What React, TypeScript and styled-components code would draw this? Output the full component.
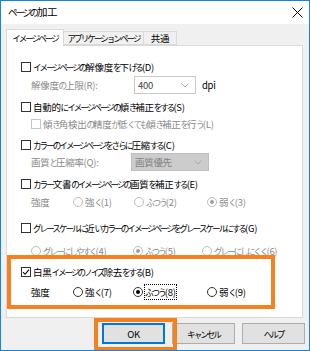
import React from 'react'
import styled, { createGlobalStyle } from 'styled-components'

const GlobalStyle = createGlobalStyle`
  html, body {
    margin: 0;
    padding: 0;
    background: #ffffff;
  }
  body {
    font-family: "Noto Sans CJK JP", "Noto Sans", sans-serif;
    font-size: 9.5px;
    letter-spacing: -0.3px;
    color: #000;
  }
`

// Kana runs are set a touch smaller and tighter so they read like the UI font's proportional kana
const Kana = styled.span`
  font-size: 0.9em;
  letter-spacing: -0.23em;
`

const KANA_RUN = /([\u3041-\u30ff]+)/

function Jp({ children }: { children: string }) {
  const parts = children.split(KANA_RUN)
  return (
    <>
      {parts.map((p, i) => (KANA_RUN.test(p) && /^[\u3041-\u30ff]+$/.test(p) ? <Kana key={i}>{p}</Kana> : p))}
    </>
  )
}

const Window = styled.div`
  width: 310px;
  height: 351px;
  box-sizing: border-box;
  border: 1px solid #1883d7;
  background: #f0f0f0;
  display: flex;
  flex-direction: column;
  overflow: hidden;
`

const TitleBar = styled.div`
  height: 23px;
  flex-shrink: 0;
  background: #ffffff;
  display: flex;
  align-items: center;
  justify-content: space-between;
  padding: 0 6px 0 7px;
`

const Title = styled.span`
  font-size: 10.5px;
  line-height: 1;
`

const CloseIcon = styled.svg`
  width: 11px;
  height: 11px;
`

const TabBar = styled.div`
  display: flex;
  align-items: flex-end;
  margin-top: 5px;
  padding-left: 5px;
  position: relative;
  z-index: 1;
`

const Tab = styled.div<{ $active?: boolean; $first?: boolean; $w: number }>`
  box-sizing: border-box;
  width: ${({ $w }) => $w}px;
  height: ${({ $active }) => ($active ? '17px' : '14px')};
  margin-bottom: ${({ $active }) => ($active ? '-1px' : '0')};
  display: flex;
  align-items: center;
  justify-content: center;
  background: ${({ $active }) => ($active ? '#ffffff' : '#f0f0f0')};
  border-top: 1px solid #d9d9d9;
  border-right: 1px solid #d9d9d9;
  border-left: ${({ $first }) => ($first ? '1px solid #d9d9d9' : 'none')};
  border-bottom: ${({ $active }) => ($active ? 'none' : '1px solid #d9d9d9')};
  white-space: nowrap;
`

const Panel = styled.div`
  box-sizing: border-box;
  margin: 0 6px 0 5px;
  height: 273px;
  background: #ffffff;
  border: 1px solid #d9d9d9;
  padding: 0 0 0 14px;
  display: flex;
  flex-direction: column;
`

const Row = styled.div<{ $mt: number; $h?: number; $indent?: number }>`
  display: flex;
  align-items: center;
  height: ${({ $h }) => $h ?? 14}px;
  margin-top: ${({ $mt }) => $mt}px;
  margin-left: ${({ $indent }) => $indent ?? 0}px;
  white-space: nowrap;
`

const Box = styled.span<{ $disabled?: boolean }>`
  box-sizing: border-box;
  width: 10px;
  height: 10px;
  flex-shrink: 0;
  border: 1px solid ${({ $disabled }) => ($disabled ? '#c6c6c6' : '#333333')};
  background: #ffffff;
  display: flex;
  align-items: center;
  justify-content: center;
  margin-right: 2px;
`

const Label = styled.span<{ $disabled?: boolean }>`
  color: ${({ $disabled }) => ($disabled ? '#8a8a8a' : '#000000')};
  line-height: 14px;
`

const FieldLabel = styled(Label)<{ $w: number }>`
  margin-left: 10px;
  width: ${({ $w }) => $w}px;
`

const Select = styled.div<{ $w: number; $disabled?: boolean }>`
  box-sizing: border-box;
  width: ${({ $w }) => $w}px;
  height: 100%;
  border: 1px solid ${({ $disabled }) => ($disabled ? '#bfbfbf' : '#c8c8c8')};
  background: ${({ $disabled }) => ($disabled ? '#cccccc' : '#ffffff')};
  color: ${({ $disabled }) => ($disabled ? '#838383' : '#444444')};
  display: flex;
  align-items: center;
  justify-content: space-between;
  padding: 0 6px 0 3px;
`

const Unit = styled.span`
  margin-left: 6px;
  color: #000;
`

const RadioGrid = styled.div<{ $mt: number; $cols: string }>`
  display: grid;
  grid-template-columns: ${({ $cols }) => $cols};
  align-items: center;
  height: 14px;
  margin-top: ${({ $mt }) => $mt}px;
  margin-left: 10px;
  white-space: nowrap;
`

const RadioItem = styled.span`
  display: flex;
  align-items: center;
`

const Circle = styled.span<{ $disabled?: boolean }>`
  box-sizing: border-box;
  width: 10px;
  height: 10px;
  border-radius: 50%;
  border: 1px solid ${({ $disabled }) => ($disabled ? '#bcbcbc' : '#333333')};
  background: #ffffff;
  display: flex;
  align-items: center;
  justify-content: center;
  margin-right: 2px;
  flex-shrink: 0;
`

const Dot = styled.span<{ $disabled?: boolean }>`
  width: 4px;
  height: 4px;
  border-radius: 50%;
  background: ${({ $disabled }) => ($disabled ? '#a0a0a0' : '#000000')};
`

const Focus = styled.span`
  outline: 1px dotted #000;
  outline-offset: 0;
  line-height: 11px;
`

const Group = styled.div`
  position: relative;
  display: flex;
  flex-direction: column;
`

const Ring = styled.div<{ $t: number; $l: number; $w: number; $h: number }>`
  position: absolute;
  top: ${({ $t }) => $t}px;
  left: ${({ $l }) => $l}px;
  width: ${({ $w }) => $w}px;
  height: ${({ $h }) => $h}px;
  box-sizing: border-box;
  border: 4px solid #f5821f;
  pointer-events: none;
`

const ButtonBar = styled.div`
  display: flex;
  justify-content: flex-end;
  gap: 7px;
  margin-top: 5px;
  padding-right: 4px;
`

const ButtonSlot = styled.div`
  position: relative;
`

const Button = styled.button<{ $default?: boolean }>`
  box-sizing: border-box;
  width: 63px;
  height: 21px;
  margin: 0;
  padding: 0;
  background: #e1e1e1;
  border: ${({ $default }) => ($default ? '2px solid #0078d7' : '1px solid #adadad')};
  font-family: inherit;
  font-size: 9.5px;
  letter-spacing: -0.3px;
  color: #000;
`

function CheckMark() {
  return (
    <svg width="8" height="8" viewBox="0 0 8 8">
      <path d="M1 4.2 L3.1 6.3 L7 1.6" fill="none" stroke="#000" strokeWidth="1.1" />
    </svg>
  )
}

function Check({ label, checked, disabled }: { label: string; checked?: boolean; disabled?: boolean }) {
  return (
    <>
      <Box $disabled={disabled}>{checked && <CheckMark />}</Box>
      <Label $disabled={disabled}>
        <Jp>{label}</Jp>
      </Label>
    </>
  )
}

function Radio({ label, checked, disabled, focused }: { label: string; checked?: boolean; disabled?: boolean; focused?: boolean }) {
  return (
    <RadioItem>
      <Circle $disabled={disabled}>{checked && <Dot $disabled={disabled} />}</Circle>
      <Label $disabled={disabled}>
        {focused ? (
          <Focus>
            <Jp>{label}</Jp>
          </Focus>
        ) : (
          <Jp>{label}</Jp>
        )}
      </Label>
    </RadioItem>
  )
}

function Chevron({ color }: { color: string }) {
  return (
    <svg width="8" height="5" viewBox="0 0 8 5">
      <path d="M0.5 0.5 L4 4 L7.5 0.5" fill="none" stroke={color} strokeWidth="1" />
    </svg>
  )
}

export default function App() {
  return (
    <>
      <GlobalStyle />
      <Window>
        <TitleBar>
          <Title>
            <Jp>ページの加工</Jp>
          </Title>
          <CloseIcon viewBox="0 0 11 11">
            <path d="M0.5 0.5 L10.5 10.5 M10.5 0.5 L0.5 10.5" stroke="#000" strokeWidth="1" />
          </CloseIcon>
        </TitleBar>

        <TabBar>
          <Tab $active $first $w={58}>
            <Jp>イメージページ</Jp>
          </Tab>
          <Tab $w={80}>
            <Jp>アプリケーションページ</Jp>
          </Tab>
          <Tab $w={33}>共通</Tab>
        </TabBar>

        <Panel>
          <Row $mt={14}>
            <Check label="イメージページの解像度を下げる(D)" />
          </Row>
          <Row $mt={2} $h={18}>
            <FieldLabel $disabled $w={103}>
              <Jp>解像度の上限(R):</Jp>
            </FieldLabel>
            <Select $w={62}>
              <span>400</span>
              <Chevron color="#a8a8a8" />
            </Select>
            <Unit>dpi</Unit>
          </Row>
          <Row $mt={6}>
            <Check label="自動的にイメージページの傾き補正をする(S)" />
          </Row>
          <Row $mt={3} $indent={10}>
            <Check disabled label="傾き角検出の精度が低くても傾き補正を行う(L)" />
          </Row>
          <Row $mt={7}>
            <Check label="カラーのイメージページをさらに圧縮する(C)" />
          </Row>
          <Row $mt={1} $h={18}>
            <FieldLabel $disabled $w={100}>
              <Jp>画質と圧縮率(Q):</Jp>
            </FieldLabel>
            <Select $w={78} $disabled>
              <span>画質優先</span>
              <Chevron color="#a8a8a8" />
            </Select>
          </Row>
          <Row $mt={6}>
            <Check label="カラー文書のイメージページの画質を補正する(E)" />
          </Row>
          <RadioGrid $mt={4} $cols="42px 61px 73px auto">
            <Label $disabled>強度</Label>
            <Radio disabled label="強く(1)" />
            <Radio disabled label="ふつう(2)" />
            <Radio disabled checked label="弱く(3)" />
          </RadioGrid>
          <Row $mt={12}>
            <Check label="グレースケールに近いカラーのイメージページをグレースケールにする(G)" />
          </Row>
          <RadioGrid $mt={9} $cols="102px 69px auto">
            <Radio disabled label="グレーにしやすく(4)" />
            <Radio disabled checked label="ふつう(5)" />
            <Radio disabled label="グレーにしにくく(6)" />
          </RadioGrid>

          <Group>
            <Row $mt={7}>
              <Check checked label="白黒イメージのノイズ除去をする(B)" />
            </Row>
            <RadioGrid $mt={6} $cols="42px 60px 74px auto">
              <Label>強度</Label>
              <Radio label="強く(7)" />
              <Radio checked focused label="ふつう(8)" />
              <Radio label="弱く(9)" />
            </RadioGrid>
            <Ring $t={-3} $l={-14} $w={268} $h={54} />
          </Group>
        </Panel>

        <ButtonBar>
          <ButtonSlot>
            <Button $default>OK</Button>
            <Ring $t={-5} $l={-8} $w={83} $h={33} />
          </ButtonSlot>
          <Button>
            <Jp>キャンセル</Jp>
          </Button>
          <Button>
            <Jp>ヘルプ</Jp>
          </Button>
        </ButtonBar>
      </Window>
    </>
  )
}
